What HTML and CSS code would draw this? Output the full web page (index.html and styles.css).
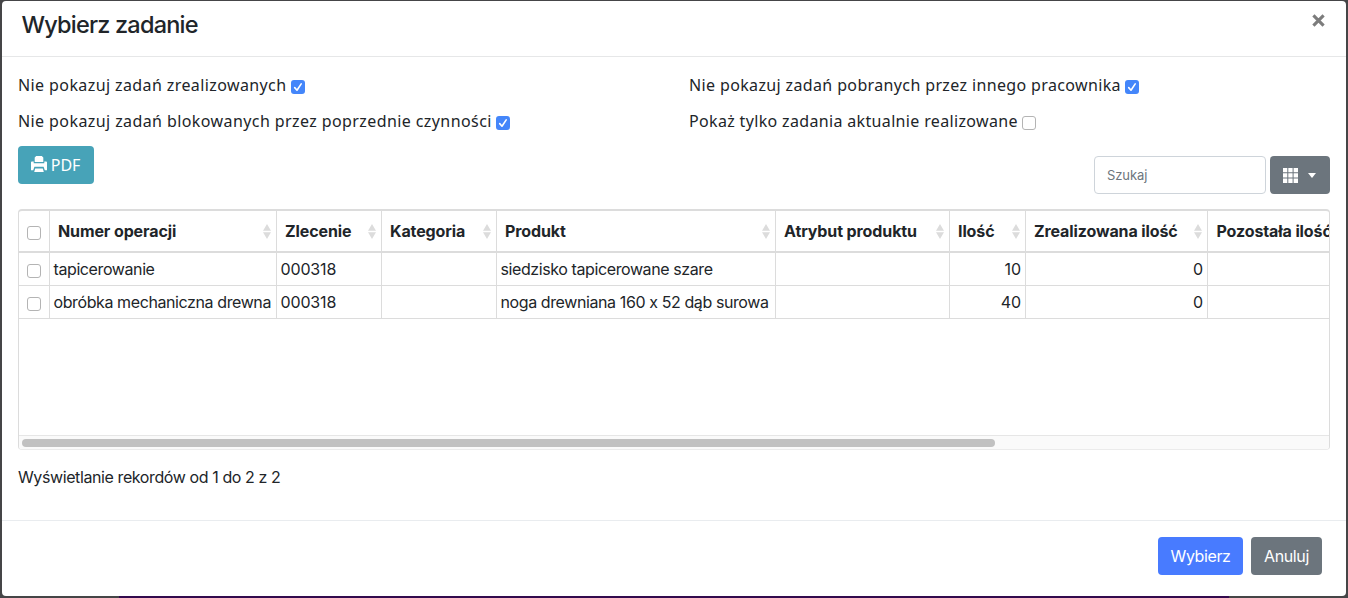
FILE: index.html
```html
<!DOCTYPE html>
<html lang="pl">
<head>
<meta charset="utf-8">
<title>Wybierz zadanie</title>
<link rel="stylesheet" href="styles.css">
</head>
<body>
<svg class="defs" width="0" height="0">
  <symbol id="sort" viewBox="0 0 8 15"><path fill="#dcdcdc" d="M4 0 8 6.8H0zM0 8.2h8L4 15z"/></symbol>
  <symbol id="tick" viewBox="0 0 14 14"><path fill="none" stroke="#fff" stroke-width="1.6" stroke-linecap="round" stroke-linejoin="round" d="M3.7 7.6 6 10.2 10.2 3.9"/></symbol>
</svg>
<div class="modal">
  <header class="modal-header">
    <h1 class="title">Wybierz zadanie</h1>
    <svg class="close" viewBox="0 0 12 12"><path d="M1.3 1.3 10.7 10.7M10.7 1.3 1.3 10.7"/></svg>
  </header>
  <main class="modal-body">
    <div class="filters">
      <label class="filter"><span class="f1">Nie pokazuj zadań zrealizowanych</span><span class="check on"><svg><use href="#tick"/></svg></span></label>
      <label class="filter"><span class="f2">Nie pokazuj zadań pobranych przez innego pracownika</span><span class="check on"><svg><use href="#tick"/></svg></span></label>
      <label class="filter"><span class="f3">Nie pokazuj zadań blokowanych przez poprzednie czynności</span><span class="check on"><svg><use href="#tick"/></svg></span></label>
      <label class="filter"><span class="f4">Pokaż tylko zadania aktualnie realizowane</span><span class="check"></span></label>
    </div>
    <div class="toolbar">
      <button class="btn pdf"><svg class="printer" viewBox="0 0 16 16"><path fill="#fff" d="M5.2 0h5.6l1.5 1.6V6H3.7V1.6zM0 6.3Q0 5.4.9 5.4H2.7V7.2h10.6V5.4h1.8q.9 0 .9.9V14.2h-2.2l-1.2-3.4H3.4l-1.2 3.4H0zM4.2 12.4h7.6l1 3.6H3.2z"/></svg><span>PDF</span></button>
      <div class="tools">
        <div class="search">Szukaj</div>
        <button class="btn gray columns"><svg class="grid" viewBox="0 0 15 15"><path fill="#fff" d="M0 0h4.3v4.3H0zM5.3 0h4.3v4.3H5.3zM10.6 0H15v4.3h-4.4zM0 5.3h4.3v4.3H0zM5.3 5.3h4.3v4.3H5.3zM10.6 5.3H15v4.3h-4.4zM0 10.6h4.3V15H0zM5.3 10.6h4.3V15H5.3zM10.6 10.6H15V15h-4.4z"/></svg><span class="caret"></span></button>
      </div>
    </div>
    <div class="table-box">
      <div class="row head">
        <div class="cell pick"><span class="check"></span></div>
        <div class="cell"><span>Numer operacji</span><svg class="sort"><use href="#sort"/></svg></div>
        <div class="cell"><span>Zlecenie</span><svg class="sort"><use href="#sort"/></svg></div>
        <div class="cell"><span>Kategoria</span><svg class="sort"><use href="#sort"/></svg></div>
        <div class="cell"><span>Produkt</span><svg class="sort"><use href="#sort"/></svg></div>
        <div class="cell"><span>Atrybut produktu</span><svg class="sort"><use href="#sort"/></svg></div>
        <div class="cell"><span>Ilość</span><svg class="sort"><use href="#sort"/></svg></div>
        <div class="cell"><span>Zrealizowana ilość</span><svg class="sort"><use href="#sort"/></svg></div>
        <div class="cell last"><span>Pozostała ilość</span></div>
      </div>
      <div class="row">
        <div class="cell pick"><span class="check"></span></div>
        <div class="cell">tapicerowanie</div>
        <div class="cell code">000318</div>
        <div class="cell"></div>
        <div class="cell">siedzisko tapicerowane szare</div>
        <div class="cell"></div>
        <div class="cell num">10</div>
        <div class="cell num">0</div>
        <div class="cell last"></div>
      </div>
      <div class="row">
        <div class="cell pick"><span class="check"></span></div>
        <div class="cell">obróbka mechaniczna drewna</div>
        <div class="cell code">000318</div>
        <div class="cell"></div>
        <div class="cell">noga drewniana 160 x 52 dąb surowa</div>
        <div class="cell"></div>
        <div class="cell num">40</div>
        <div class="cell num">0</div>
        <div class="cell last"></div>
      </div>
      <div class="scrollbar"><div class="thumb"></div></div>
    </div>
    <p class="info">Wyświetlanie rekordów od 1 do 2 z 2</p>
  </main>
  <footer class="modal-footer">
    <button class="btn blue">Wybierz</button>
    <button class="btn gray cancel">Anuluj</button>
  </footer>
</div>
<div class="backdrop-strip"></div>
</body>
</html>
```

FILE: styles.css
```css
* { box-sizing: border-box; }
body {
  margin: 0;
  height: 598px;
  overflow: hidden;
  padding: 1px 2px 0;
  background: #454547;
  color: #212529;
  font: 16px/24px Inter, "Liberation Sans", sans-serif;
  letter-spacing: -0.4px;
}
.defs { position: absolute; }
.modal {
  height: 595px;
  display: flex;
  flex-direction: column;
  background: #fff;
  border-radius: 4px;
}
.modal-header {
  height: 56px;
  flex: none;
  display: flex;
  justify-content: space-between;
  padding: 6px 21px 0 19.5px;
  border-bottom: 1px solid #e6e7e8;
}
.title { margin: 0; font-size: 23.5px; line-height: 36px; font-weight: 500; letter-spacing: -0.8px; white-space: nowrap; }
.close { width: 13px; height: 13px; margin-top: 6.5px; fill: none; stroke: #7c7c7c; stroke-width: 2.9; }
.modal-body { flex: 1; padding: 16px 16px 0; }
.filters {
  display: grid;
  grid-template-columns: 671px 1fr;
  grid-auto-rows: 36px;
  font-family: "Noto Sans", sans-serif;
}
.filter { display: flex; align-items: flex-start; gap: 4.5px; white-space: nowrap; }
.f1 { letter-spacing: 0.4px; }
.f2 { letter-spacing: 0.365px; }
.f3 { letter-spacing: 0.41px; }
.f4 { letter-spacing: 0.34px; }
.filter .check { margin-top: 7px; }
.check {
  width: 14px;
  height: 14px;
  flex: none;
  display: block;
  border: 1px solid #b4b4b4;
  border-radius: 3px;
  background: #fff;
}
.check.on { border: 0; background: #4486fa; }
.check svg { display: block; width: 14px; height: 14px; }
.toolbar { height: 63px; margin-top: 1px; display: flex; justify-content: space-between; }
.btn {
  height: 38px;
  border: 0;
  border-radius: 4px;
  display: flex;
  align-items: center;
  justify-content: center;
  padding: 0;
  color: #fff;
  font: inherit;
  letter-spacing: inherit;
}
.pdf { width: 76px; gap: 4px; padding-right: 1px; background: #47a3b8; font-family: "Noto Sans", sans-serif; letter-spacing: -0.1px; }
.printer { width: 16px; height: 16px; margin-top: -3px; }
.tools { display: flex; gap: 4px; margin-top: 10px; }
.search {
  width: 172px;
  height: 38px;
  padding: 0 12px;
  border: 1px solid #ced4da;
  border-radius: 4px;
  color: #6c757d;
  font-size: 13px;
  line-height: 37px;
  letter-spacing: -0.1px;
}
.gray { background: #6c757d; }
.blue { width: 85px; background: #487bff; }
.cancel { width: 71px; }
.columns { width: 60px; gap: 10px; padding-right: 1px; }
.grid { width: 15px; height: 15px; }
.caret { border: 4.5px solid transparent; border-top: 5px solid #fff; border-bottom: 0; }
.table-box {
  height: 241px;
  display: flex;
  flex-direction: column;
  border: 1px solid #dee2e6;
  border-color: #dcdcdc #dcdcdc #ebebeb;
  border-top-width: 2px;
  border-radius: 4px;
  overflow: hidden;
}
.row {
  flex: none;
  display: grid;
  grid-template-columns: 31px 227px 105px 115px 279px 174px 76px 182px 1fr;
  height: 33px;
  border-bottom: 1px solid #dcdcdc;
  white-space: nowrap;
}
.cell { min-width: 0; padding: 4px 4px 0 3.5px; border-right: 1px solid #dcdcdc; }
.cell.last { border-right: 0; overflow: hidden; }
.num { text-align: right; letter-spacing: -0.1px; }
.code { letter-spacing: -0.15px; }
.head { height: 42px; border-bottom-width: 2px; font-weight: 700; letter-spacing: -0.11px; }
.head .cell { display: flex; justify-content: space-between; padding: 8px 5.5px 0 8px; }
.head .cell.last { padding-left: 8.5px; }
.cell.pick, .head .cell.pick { padding: 11px 0 0 8px; }
.head .cell.pick { padding-top: 15px; }
.sort { width: 8px; height: 15px; margin-top: 5px; flex: none; }
.scrollbar { height: 14px; flex: none; margin-top: auto; padding: 3px; border-top: 1px solid #e6e6e6; background: #fafafa; }
.thumb { width: 973px; height: 8px; border-radius: 4px; background: #c1c1c1; }
.info { margin: 15px 0 0; }
.modal-footer {
  height: 76px;
  flex: none;
  display: flex;
  gap: 8px;
  justify-content: flex-end;
  padding: 16px 24px 0;
  border-top: 1px solid #e9ecef;
}
.backdrop-strip { width: 1110px; height: 2px; margin-left: 117px; background: #330a4d; }
```
